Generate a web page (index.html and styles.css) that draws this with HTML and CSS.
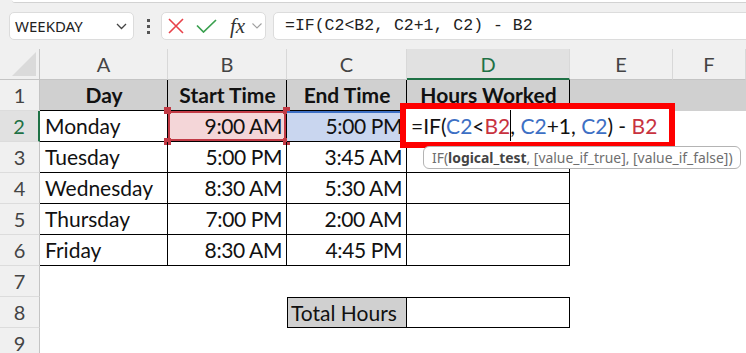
FILE: index.html
```html
<!DOCTYPE html>
<html lang="en">
<head>
    <meta charset="UTF-8">
    <title>Hours Worked</title>
    <link rel="stylesheet" href="styles.css">
</head>
<body>
<div class="app">
    <div class="ribbon-edge"></div>

    <div class="formula-bar">
        <div class="name-box">
            <span>WEEKDAY</span>
            <svg class="chevron" width="11" height="7" viewBox="0 0 11 7"><polyline points="1,1 5.5,5.5 10,1" fill="none" stroke="#444" stroke-width="1.3"/></svg>
        </div>
        <div class="kebab"><i></i><i></i><i></i></div>
        <div class="fx-buttons">
            <svg class="icon-cancel" width="16" height="16" viewBox="0 0 16 16"><path d="M1 1 L15 15 M15 1 L1 15" stroke="#e8424a" stroke-width="1.6" fill="none"/></svg>
            <svg class="icon-enter" width="21" height="14" viewBox="0 0 21 14"><polyline points="1,6.5 7.5,13 20,1" fill="none" stroke="#3aa04f" stroke-width="1.7"/></svg>
            <span class="fx">fx</span>
            <svg class="icon-more" width="10" height="6" viewBox="0 0 10 6"><polyline points="0.5,0.5 5,5 9.5,0.5" fill="none" stroke="#a0a0a0" stroke-width="1.1"/></svg>
        </div>
        <div class="formula-input">=IF(C2&lt;B2, C2+1, C2) - B2</div>
    </div>

    <div class="sheet">
        <!-- column headers -->
        <div class="col-head corner"><span class="corner-tri"></span></div>
        <div class="col-head">A</div>
        <div class="col-head">B</div>
        <div class="col-head">C</div>
        <div class="col-head active">D</div>
        <div class="col-head">E</div>
        <div class="col-head">F</div>

        <!-- row 1 -->
        <div class="row-head">1</div>
        <div class="cell tb hdr">Day</div>
        <div class="cell tb hdr">Start Time</div>
        <div class="cell tb hdr">End Time</div>
        <div class="cell tb hdr">Hours Worked</div>
        <div class="cell fill"></div>
        <div class="cell fill"></div>

        <!-- row 2 -->
        <div class="row-head active">2</div>
        <div class="cell tb">Monday</div>
        <div class="cell tb num ref-red">9:00 AM
            <span class="handle tl"></span><span class="handle tr"></span>
            <span class="handle bl"></span><span class="handle br"></span>
        </div>
        <div class="cell tb num ref-blue">5:00 PM<span class="handle-blue"></span></div>
        <div class="cell tb"></div>
        <div class="cell"></div>
        <div class="cell"></div>

        <!-- row 3 -->
        <div class="row-head">3</div>
        <div class="cell tb">Tuesday</div>
        <div class="cell tb num">5:00 PM</div>
        <div class="cell tb num">3:45 AM</div>
        <div class="cell tb"></div>
        <div class="cell"></div>
        <div class="cell"></div>

        <!-- row 4 -->
        <div class="row-head">4</div>
        <div class="cell tb">Wednesday</div>
        <div class="cell tb num">8:30 AM</div>
        <div class="cell tb num">5:30 AM</div>
        <div class="cell tb"></div>
        <div class="cell"></div>
        <div class="cell"></div>

        <!-- row 5 -->
        <div class="row-head">5</div>
        <div class="cell tb">Thursday</div>
        <div class="cell tb num">7:00 PM</div>
        <div class="cell tb num">2:00 AM</div>
        <div class="cell tb"></div>
        <div class="cell"></div>
        <div class="cell"></div>

        <!-- row 6 -->
        <div class="row-head">6</div>
        <div class="cell tb">Friday</div>
        <div class="cell tb num">8:30 AM</div>
        <div class="cell tb num">4:45 PM</div>
        <div class="cell tb"></div>
        <div class="cell"></div>
        <div class="cell"></div>

        <!-- row 7 -->
        <div class="row-head">7</div>
        <div class="cell"></div>
        <div class="cell"></div>
        <div class="cell"></div>
        <div class="cell"></div>
        <div class="cell"></div>
        <div class="cell"></div>

        <!-- row 8 -->
        <div class="row-head">8</div>
        <div class="cell"></div>
        <div class="cell"></div>
        <div class="cell total-label">Total Hours</div>
        <div class="cell total-value"></div>
        <div class="cell"></div>
        <div class="cell"></div>

        <!-- row 9 -->
        <div class="row-head">9</div>
        <div class="cell"></div>
        <div class="cell"></div>
        <div class="cell"></div>
        <div class="cell"></div>
        <div class="cell"></div>
        <div class="cell"></div>

        <!-- in-cell editor, boxed in red -->
        <div class="editor">=IF(<span class="ref-c">C2</span>&lt;<span class="ref-b">B2</span><span class="caret"></span>, <span class="ref-c">C2</span>+1, <span class="ref-c">C2</span>) - <span class="ref-b">B2</span></div>

        <div class="tooltip">IF(<b>logical_test</b>, [value_if_true], [value_if_false])</div>
    </div>
</div>
</body>
</html>
```

FILE: styles.css
```css
body {
    margin: 0;
    font-family: 'Lato', 'Open Sans', sans-serif;
    background-color: #fff;
    overflow: hidden;
}

.app {
    width: 746px;
    height: 353px;
    overflow: hidden;
    background-color: #f0f0f0;
}

.ribbon-edge {
    height: 2px;
    margin-left: 12px;
    background-color: #fff;
    border-bottom: 1px solid #d2d2d2;
    border-bottom-left-radius: 4px;
}

/* formula bar */
.formula-bar {
    display: flex;
    align-items: stretch;
    height: 46px;
    box-sizing: border-box;
    padding: 9px 0 9px 9px;
}

.name-box {
    width: 125px;
    box-sizing: border-box;
    display: flex;
    align-items: center;
    justify-content: space-between;
    padding: 0 6px 0 5px;
    background-color: #fff;
    border: 1px solid #dcdcdc;
    border-radius: 5px;
    font-family: 'Noto Sans', sans-serif;
    font-size: 15px;
    color: #222;
}

.kebab {
    display: flex;
    flex-direction: column;
    justify-content: center;
    gap: 3px;
    margin: 0 11px 0 13px;
}

.kebab i {
    width: 3px;
    height: 3px;
    background-color: #555;
}

.fx-buttons {
    width: 105px;
    box-sizing: border-box;
    display: flex;
    align-items: center;
    padding-left: 6px;
    background-color: #fff;
    border: 1px solid #dcdcdc;
    border-radius: 5px;
}

.icon-enter {
    margin-left: 12px;
}

.fx {
    margin-left: 13px;
    font-family: 'Liberation Serif', serif;
    font-style: italic;
    font-size: 21px;
    color: #333;
    line-height: 1;
}

.icon-more {
    margin-left: 7px;
}

.formula-input {
    flex: 1;
    margin: 0 -20px 0 7px;
    padding-left: 11px;
    background-color: #fff;
    border: 1px solid #dcdcdc;
    border-radius: 5px;
    font-family: 'Liberation Mono', monospace;
    font-size: 16.5px;
    line-height: 26px;
    color: #222;
}

/* grid */
.sheet {
    position: relative;
    display: grid;
    grid-template-columns: 40px 128px 119px 120px 163px 103px 73px;
    grid-auto-rows: 31px;
    background-color: #fff;
}

.col-head {
    box-sizing: border-box;
    text-align: center;
    font-size: 20px;
    line-height: 30px;
    color: #444;
    background-color: #f0f0f0;
    border-right: 1px solid #d8d8d8;
    border-bottom: 1px solid #c4c4c4;
}

.col-head.active {
    background-color: #e1e1e1;
    color: #1e7145;
    border-bottom: 2px solid #1e7145;
}

.corner {
    position: relative;
    border-right-color: #c4c4c4;
}

.corner-tri {
    position: absolute;
    right: 3px;
    bottom: 3px;
    width: 0;
    height: 0;
    border-left: 24px solid transparent;
    border-bottom: 24px solid #dadada;
}

.row-head {
    box-sizing: border-box;
    text-align: center;
    font-size: 20px;
    line-height: 31px;
    color: #444;
    background-color: #f0f0f0;
    border-right: 1px solid #c4c4c4;
    border-bottom: 1px solid #dcdcdc;
}

.row-head.active {
    background-color: #e1e1e1;
    color: #1e7145;
    border-right: 2px solid #1e7145;
}

.cell {
    position: relative;
    box-sizing: border-box;
    padding: 0 4px 0 5px;
    font-size: 21px;
    line-height: 31px;
    color: #111;
    white-space: nowrap;
}

.cell.tb {
    border-right: 1px solid #000;
    border-bottom: 1px solid #000;
    line-height: 30px;
}

.cell.hdr {
    background-color: #d0d0d0;
    font-weight: bold;
    text-align: center;
}

.cell.fill {
    background-color: #d0d0d0;
}

.num {
    text-align: right;
    letter-spacing: -0.4px;
}

/* formula references */
.ref-red {
    background-color: #f4d6d8;
    box-shadow: inset 0 0 0 2px #c23a45;
}

.ref-blue {
    background-color: #c9d6ef;
    box-shadow: inset 0 2px 0 #3d6fc4;
}

.handle {
    position: absolute;
    width: 7px;
    height: 7px;
    background-color: #c23a45;
}

.handle.tl { left: -4px; top: -4px; }
.handle.tr { right: -4px; top: -4px; }
.handle.bl { left: -4px; bottom: -4px; }
.handle.br { right: -4px; bottom: -4px; }

.handle-blue {
    position: absolute;
    right: -3px;
    top: -2px;
    width: 6px;
    height: 6px;
    background-color: #3d6fc4;
}

.total-label {
    background-color: #d0d0d0;
    border: 1px solid #000;
    padding-left: 3px;
    line-height: 29px;
}

.total-value {
    border: 1px solid #000;
    border-left: none;
}

/* editor with red annotation box */
.editor {
    position: absolute;
    left: 400px;
    top: 54px;
    width: 275px;
    height: 45px;
    box-sizing: border-box;
    padding: 1px 0 0 5px;
    background-color: #fff;
    border: 6px solid #fe0000;
    font-size: 21px;
    line-height: 31px;
    color: #111;
    white-space: nowrap;
}

.ref-c {
    color: #3d6fc4;
}

.ref-b {
    color: #c8323f;
}

.caret {
    display: inline-block;
    width: 1px;
    height: 31px;
    margin-right: -1px;
    background-color: #000;
    vertical-align: top;
}

.tooltip {
    position: absolute;
    left: 423px;
    top: 97px;
    width: 318px;
    height: 23px;
    box-sizing: border-box;
    padding-left: 8px;
    background-color: #fff;
    border: 1px solid #b4b4b4;
    border-radius: 6px;
    font-family: 'Noto Sans', sans-serif;
    font-size: 13.9px;
    line-height: 21px;
    color: #6e6e6e;
    white-space: nowrap;
}

.tooltip b {
    color: #444;
}
```
